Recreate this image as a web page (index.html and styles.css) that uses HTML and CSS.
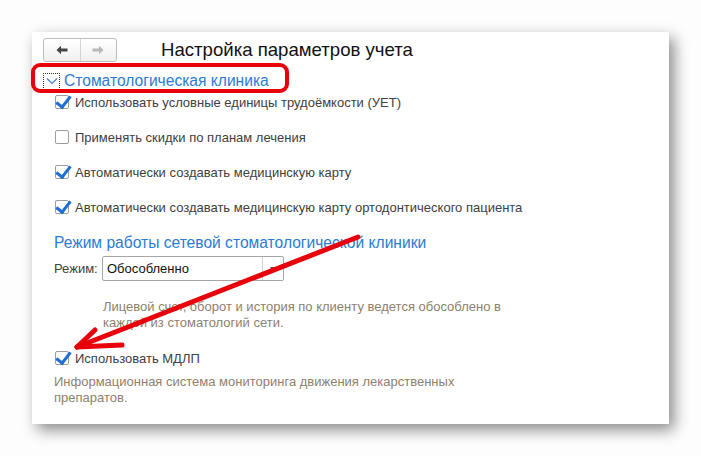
FILE: index.html
```html
<!DOCTYPE html>
<html lang="ru">
<head>
  <meta charset="UTF-8">
  <title>Настройка параметров учета</title>
  <link rel="stylesheet" href="styles.css">
</head>
<body>
  <div class="window">
    <div class="topbar">
      <div class="nav">
        <span class="nav-btn back">
          <svg width="12" height="10" viewBox="0 0 12 10"><path d="M0.5 5 L5 0.8 L5 3.6 L11.5 3.6 L11.5 6.4 L5 6.4 L5 9.2 Z" fill="#444"/></svg>
        </span>
        <span class="nav-btn fwd">
          <svg width="12" height="10" viewBox="0 0 12 10"><path d="M11.5 5 L7 0.8 L7 3.6 L0.5 3.6 L0.5 6.4 L7 6.4 L7 9.2 Z" fill="#b8b8b8"/></svg>
        </span>
      </div>
      <div class="title">Настройка параметров учета</div>
    </div>

    <div class="group-head">
      <span class="chevron">
        <svg width="12" height="8" viewBox="0 0 12 8"><path d="M1 1.5 L6 6.5 L11 1.5" fill="none" stroke="#3d7fd0" stroke-width="1.2"/></svg>
      </span>
      <span class="group-title">Стоматологическая клиника</span>
    </div>

    <div class="options">
      <label class="check-row first"><span class="box on"></span>Использовать условные единицы трудоёмкости (УЕТ)</label>
      <label class="check-row"><span class="box"></span>Применять скидки по планам лечения</label>
      <label class="check-row"><span class="box on"></span>Автоматически создавать медицинскую карту</label>
      <label class="check-row"><span class="box on"></span>Автоматически создавать медицинскую карту ортодонтического пациента</label>
    </div>

    <div class="section">
      <div class="section-title">Режим работы сетевой стоматологической клиники</div>
      <div class="mode-row">
        <span class="mode-label">Режим:</span>
        <div class="select">
          <span class="select-value">Обособленно</span>
          <span class="select-btn"></span>
        </div>
      </div>
      <div class="hint indent">Лицевой счет, оборот и история по клиенту ведется обособлено в<br>каждой из стоматологий сети.</div>
      <label class="check-row mdlp"><span class="box on"></span>Использовать МДЛП</label>
      <div class="hint small-gap">Информационная система мониторинга движения лекарственных<br>препаратов.</div>
    </div>
  </div>

  <div class="mark"></div>
  <svg class="arrow" width="701" height="456" viewBox="0 0 701 456">
    <g stroke="#e8000a" stroke-width="5" stroke-linecap="round" fill="none">
      <path d="M358 237 L77 347"/>
      <path d="M77 347 L95 330"/>
      <path d="M77 347 L122 345"/>
    </g>
  </svg>
</body>
</html>
```

FILE: styles.css
```css
* {
  box-sizing: border-box;
}

body {
  margin: 0;
  padding: 32px 0 0 32px;
  background: #fdfdfd;
  font-family: "Liberation Sans", Arial, sans-serif;
  font-size: 13px;
  color: #404040;
  position: relative;
  width: 701px;
  height: 456px;
  overflow: hidden;
}

.window {
  width: 637px;
  height: 392px;
  background: #fff;
  box-shadow: 5px 6px 14px rgba(0, 0, 0, 0.45);
}

.topbar {
  height: 40px;
  display: flex;
  align-items: flex-start;
  padding: 6px 0 0 11px;
}

.nav {
  display: flex;
  width: 74px;
  height: 24px;
  border: 1px solid #bdbdbd;
  border-radius: 3px;
  background: linear-gradient(#ffffff, #f0f0f0);
}

.nav-btn {
  flex: 1;
  display: flex;
  align-items: center;
  justify-content: center;
}

.nav-btn.back {
  border-right: 1px solid #d4d4d4;
}

.title {
  margin-left: 44px;
  margin-top: 1px;
  font-size: 18.6px;
  color: #111;
}

.group-head {
  height: 18px;
  display: flex;
  align-items: center;
  padding-left: 11px;
}

.chevron {
  width: 17px;
  height: 17px;
  border: 1px dotted #333;
  display: flex;
  align-items: center;
  justify-content: center;
  margin-right: 4px;
}

.group-title {
  font-size: 15.6px;
  color: #2a7bd5;
}

.options {
  padding-left: 23px;
}

.check-row {
  height: 18px;
  display: flex;
  align-items: center;
  margin-top: 17px;
}

.check-row.first {
  margin-top: 3px;
}

.box {
  width: 14px;
  height: 14px;
  border: 1px solid #9c9c9c;
  border-radius: 2px;
  background: #fff;
  margin-right: 6px;
  position: relative;
  flex: none;
}

.box.on::after {
  content: "";
  position: absolute;
  left: 3px;
  top: -3px;
  width: 6px;
  height: 12px;
  border-right: 3px solid #1f6fd2;
  border-bottom: 3px solid #1f6fd2;
  transform: rotate(38deg);
}

.section {
  padding-left: 22px;
}

.section-title {
  margin-top: 17px;
  font-size: 15.6px;
  line-height: 20px;
  color: #2a7bd5;
}

.mode-row {
  display: flex;
  align-items: center;
  margin-top: 3px;
}

.mode-label {
  width: 48px;
}

.select {
  width: 182px;
  height: 25px;
  border: 1px solid #a6a6a6;
  border-radius: 2px;
  display: flex;
  align-items: center;
}

.select-value {
  flex: 1;
  padding-left: 4px;
  color: #111;
}

.select-btn {
  width: 21px;
  height: 100%;
  border-left: 1px solid #cfcfcf;
  position: relative;
}

.select-btn::after {
  content: "";
  position: absolute;
  left: 7px;
  top: 10px;
  border-left: 3.5px solid transparent;
  border-right: 3.5px solid transparent;
  border-top: 4px solid #555;
}

.hint {
  line-height: 16px;
  color: #8e806e;
}

.hint.indent {
  margin-top: 18px;
  padding-left: 49px;
}

.check-row.mdlp {
  margin-top: 18px;
  padding-left: 1px;
}

.hint.small-gap {
  margin-top: 7px;
}

.mark {
  position: absolute;
  left: 31px;
  top: 63px;
  width: 258px;
  height: 30px;
  border: 4px solid #e8000a;
  border-radius: 9px;
}

.arrow {
  position: absolute;
  left: 0;
  top: 0;
  pointer-events: none;
}
```
